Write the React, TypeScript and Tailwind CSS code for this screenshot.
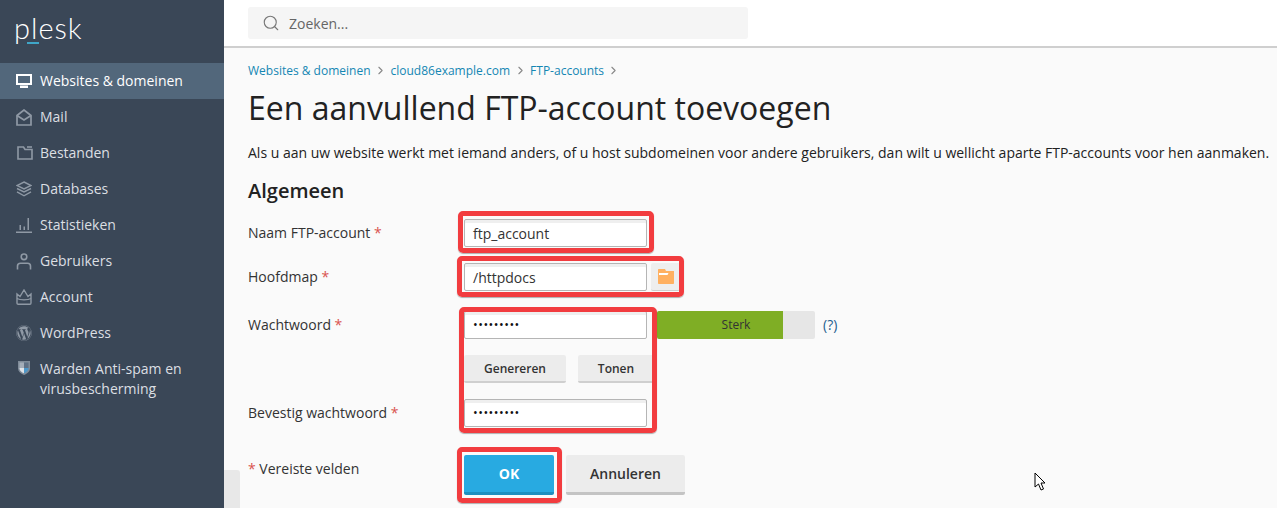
import React from 'react';
import { Search, ChevronRight } from 'lucide-react';
import { FaWordpress } from 'react-icons/fa';

const MonitorIcon = () => (
  <svg width="16" height="14" viewBox="0 0 16 14" className="block">
    <path fillRule="evenodd" d="M0 0h16v11H0zM2 2v7h12V2z" fill="currentColor" />
    <rect x="4" y="11.500" width="8" height="2.500" fill="currentColor" />
  </svg>
);

const MailIcon = () => (
  <svg width="16" height="17" viewBox="0 0 16 17" fill="none" stroke="currentColor" strokeWidth="1.700" className="block">
    <path d="M1 6.500 8 1l7 5.500V16H1z" />
    <path d="M1 6.500 8 11l7-4.500" />
  </svg>
);

const FolderIcon = () => (
  <svg width="16" height="14" viewBox="0 0 16 14" fill="none" stroke="currentColor" strokeWidth="1.600" className="block ml-[1px]">
    <path d="M1 1h5.500l1.500 2.500h7V13H1z" />
    <path d="M10 1h5" />
  </svg>
);

const LayersIcon = () => (
  <svg width="16" height="16" viewBox="0 0 16 16" fill="none" stroke="currentColor" strokeWidth="1.400" className="block">
    <path d="M8 1 15 4.500 8 8 1 4.500z" />
    <path d="M1 7.500 8 11l7-3.500" />
    <path d="M1 10.800 8 14.800l7-4" />
  </svg>
);

const StatsIcon = () => (
  <svg width="16" height="16" viewBox="0 0 16 16" fill="currentColor" className="block">
    <rect x="0" y="14.500" width="16" height="1.500" />
    <rect x="3.500" y="8" width="1.500" height="5" />
    <rect x="7.500" y="9.500" width="1.500" height="3.500" />
    <rect x="11.500" y="1" width="1.500" height="12" />
  </svg>
);

const UserIcon = () => (
  <svg width="16" height="17" viewBox="0 0 16 17" fill="none" stroke="currentColor" strokeWidth="1.600" className="block">
    <circle cx="8" cy="3.800" r="2.800" />
    <path d="M1.500 16.500V13c0-1.800 1.200-2.800 3-2.800h7c1.800 0 3 1 3 2.800v3.500" />
  </svg>
);

const CrownIcon = () => (
  <svg width="16" height="16" viewBox="0 0 16 16" fill="none" stroke="currentColor" strokeWidth="1.400" className="block">
    <path d="M1 5 4 7.500 8 1l4 6.500L15 5v9c0 .8-.5 1.200-1.200 1.200H2.200C1.500 15.200 1 14.800 1 14z" />
    <path d="M1 9.500c3 1.800 11 1.800 14 0" />
  </svg>
);

const ShieldIcon = () => (
  <svg width="12" height="14" viewBox="0 0 12 14" className="block">
    <path d="M0 0h12v7.500c0 3-2.500 5-6 6.500-3.500-1.500-6-3.500-6-6.500z" fill="#7f8b98" />
    <path d="M1.500 1.500H6V7H1.500z" fill="#a3adb8" />
    <path d="M6 1.500h4.500V7H6z" fill="#5f7084" />
    <path d="M1.500 7H6v5.300c-2.500-1-4.500-2.600-4.500-4.800z" fill="#dfe3e7" />
    <path d="M6 7h4.500v.5c0 2.200-2 3.800-4.500 4.800z" fill="#4d97c9" />
  </svg>
);

const menu = [
  { label: 'Mail', icon: <MailIcon /> },
  { label: 'Bestanden', icon: <FolderIcon /> },
  { label: 'Databases', icon: <LayersIcon /> },
  { label: 'Statistieken', icon: <StatsIcon /> },
  { label: 'Gebruikers', icon: <UserIcon /> },
  { label: 'Account', icon: <CrownIcon /> },
  { label: 'WordPress', icon: <FaWordpress size={16} className="block" /> },
];

const Req = () => <span className="text-[#d9534f]"> *</span>;

const Highlight = ({ className }: { className: string }) => (
  <div className={`absolute z-10 rounded-[5px] border-[5px] border-[#f23c3f] shadow-[0_1px_1px_rgba(0,0,0,0.3)] pointer-events-none ${className}`} />
);

const Field = ({ value }: { value: string }) => (
  <div className="w-[183px] h-[28px] bg-white border border-[#b5b5b5] rounded-[2px] shadow-[inset_0_3px_0_#efefef] flex items-center pl-[8px] text-[14px] text-[#333]">
    {value}
  </div>
);

const Dots = () => (
  <div className="w-[183px] h-[28px] bg-white border border-[#b5b5b5] rounded-[2px] shadow-[inset_0_3px_0_#efefef] flex items-center pl-[8px] text-[#111] text-[12.500px] tracking-[0.500px] leading-none">
    •••••••••
  </div>
);

const SmallButton = ({ label, className }: { label: string; className: string }) => (
  <div className={`h-[28px] pt-[1px] bg-[#ececec] border-b-2 border-[#cfcfcf] rounded-[2px] flex items-center justify-center text-[12px] font-semibold text-[#333] ${className}`}>
    {label}
  </div>
);

export default function App() {
  return (
    <div className="flex w-[1277px] h-[508px] overflow-hidden bg-[#fafafa] font-['Open_Sans',sans-serif] relative">
      <aside className="w-[224px] shrink-0 bg-[#3a4757] flex flex-col">
        <div className="h-[63px] pl-[14px] pt-[10px] relative">
          <span className="font-['Lato',sans-serif] font-light text-[29px] leading-[36px] tracking-[1px] text-white">plesk</span>
          <div className="absolute left-[27px] top-[42px] w-[12px] h-[2px] bg-[#3fa6c8]" />
        </div>
        <div className="h-[36px] pb-[2px] bg-[#52677b] flex items-center text-white text-[14px]">
          <span className="w-[40px] pl-[16px] shrink-0 pt-[2px]"><MonitorIcon /></span>
          Websites &amp; domeinen
        </div>
        {menu.map((item) => (
          <div key={item.label} className="h-[36px] pb-[2px] flex items-center text-[#dcdfe3] text-[14px]">
            <span className="w-[40px] pl-[16px] shrink-0 pt-[2px] text-[#8f99a5]">{item.icon}</span>
            {item.label}
          </div>
        ))}
        <div className="flex pt-[8px] text-[#dcdfe3] text-[14px] leading-[20px]">
          <span className="w-[40px] pl-[18px] pt-[2px] shrink-0"><ShieldIcon /></span>
          <span>Warden Anti-spam en<br />virusbescherming</span>
        </div>
      </aside>

      <main className="flex-1 min-w-0 flex flex-col relative">
        <header className="h-[48px] shrink-0 bg-white border-b-2 border-[#cfcfcf] pl-[24px] pt-[7px]">
          <div className="w-[500px] h-[32px] bg-[#f5f5f5] rounded-[3px] flex items-center pl-[14px] gap-[9px] text-[14px] text-[#666]">
            <Search size={18} strokeWidth={1.5} className="text-[#777]" />
            Zoeken...
          </div>
        </header>

        <div className="pl-[24px]">
          <nav className="h-[17px] mt-[14px] flex items-center text-[12px] text-[#1486b3]">
            <span>Websites &amp; domeinen</span>
            <ChevronRight size={13} className="text-[#888] mx-[3.500px]" />
            <span>cloud86example.com</span>
            <ChevronRight size={13} className="text-[#888] mx-[3.500px]" />
            <span>FTP-accounts</span>
            <ChevronRight size={13} className="text-[#888] mx-[3px]" />
          </nav>

          <h1 className="text-[32px] leading-[40px] mt-[9px] text-[#222] whitespace-nowrap">Een aanvullend FTP-account toevoegen</h1>

          <p className="text-[14px] leading-[20px] mt-[15px] text-[#222] whitespace-nowrap">
            Als u aan uw website werkt met iemand anders, of u host subdomeinen voor andere gebruikers, dan wilt u wellicht aparte FTP-accounts voor hen aanmaken.
          </p>

          <h2 className="text-[20px] leading-[26px] mt-[15px] font-semibold text-[#222]">Algemeen</h2>

          <div className="mt-[15px] flex flex-col text-[14px] text-[#333]">
            <div className="flex h-[28px]">
              <label className="w-[216px] leading-[28px]">Naam FTP-account<Req /></label>
              <div className="relative">
                <Field value="ftp_account" />
                <Highlight className="-left-[6px] -top-[8px] w-[196px] h-[42px]" />
              </div>
            </div>

            <div className="flex h-[28px] mt-[16px]">
              <label className="w-[216px] leading-[28px]">Hoofdmap<Req /></label>
              <div className="relative flex gap-[4px]">
                <Field value="/httpdocs" />
                <div className="w-[29px] h-[28px] bg-[#eeeeee] border-b border-[#cfcfcf] rounded-[2px] flex items-center justify-center">
                  <svg width="16" height="15" viewBox="0 0 16 15">
                    <path d="M0 1C0 .4.400 0 1 0h6l1 2h8v12c0 .6-.4 1-1 1H1c-.6 0-1-.4-1-1z" fill="#ffb060" />
                    <path d="M1 4h9.500L9.500 6H1z" fill="#ffffff" />
                  </svg>
                </div>
                <Highlight className="-left-[7px] -top-[7px] w-[227px] h-[41px]" />
              </div>
            </div>

            <div className="relative mt-[20px]">
              <div className="flex h-[28px]">
                <label className="w-[216px] leading-[28px]">Wachtwoord<Req /></label>
                <Dots />
                <div className="relative ml-[10px] w-[158px] h-[28px] bg-[#e6e6e6] rounded-[2px] overflow-hidden">
                  <div className="w-[126px] h-full bg-[#7fae25]" />
                  <span className="absolute inset-0 flex items-center justify-center text-[12px] text-[#333]">Sterk</span>
                </div>
                <span className="ml-[8px] text-[14px] leading-[28px] text-[#1f5f8f]">(?)</span>
              </div>
              <div className="flex h-[28px] mt-[16px] pl-[216px] gap-[12px]">
                <SmallButton label="Genereren" className="w-[102px]" />
                <SmallButton label="Tonen" className="w-[76px]" />
              </div>
              <div className="flex h-[28px] mt-[16px]">
                <label className="w-[216px] leading-[28px]">Bevestig wachtwoord<Req /></label>
                <Dots />
              </div>
              <Highlight className="left-[211px] -top-[4px] w-[198px] h-[126px]" />
            </div>

            <div className="flex mt-[28px]">
              <div className="w-[216px] pt-[4px] leading-[20px]"><span className="text-[#d9534f]">*</span> Vereiste velden</div>
              <div className="relative">
                <div className="w-[90px] h-[40px] bg-[#28aae1] border-b-[3px] border-[#1e8fbf] rounded-[2px] flex items-center justify-center text-white font-bold text-[14px]">OK</div>
                <Highlight className="-left-[7px] -top-[8px] w-[105px] h-[56px]" />
              </div>
              <div className="ml-[12px] w-[119px] h-[40px] bg-[#ececec] border-b-[3px] border-[#c4c4c4] rounded-[2px] flex items-center justify-center font-semibold text-[14px] text-[#333]">Annuleren</div>
            </div>
          </div>
        </div>

        <div className="absolute left-0 top-[470px] w-[16px] h-[38px] bg-[#e8e8e8] rounded-tr-[3px]" />
      </main>

      <svg className="absolute left-[1034px] top-[472px]" width="13" height="20" viewBox="0 0 13 20">
        <path d="M1 1v14l3.500-3 2.500 6 2.500-1-2.500-6H11z" fill="#fff" stroke="#000" strokeWidth="1" />
      </svg>
    </div>
  );
}
